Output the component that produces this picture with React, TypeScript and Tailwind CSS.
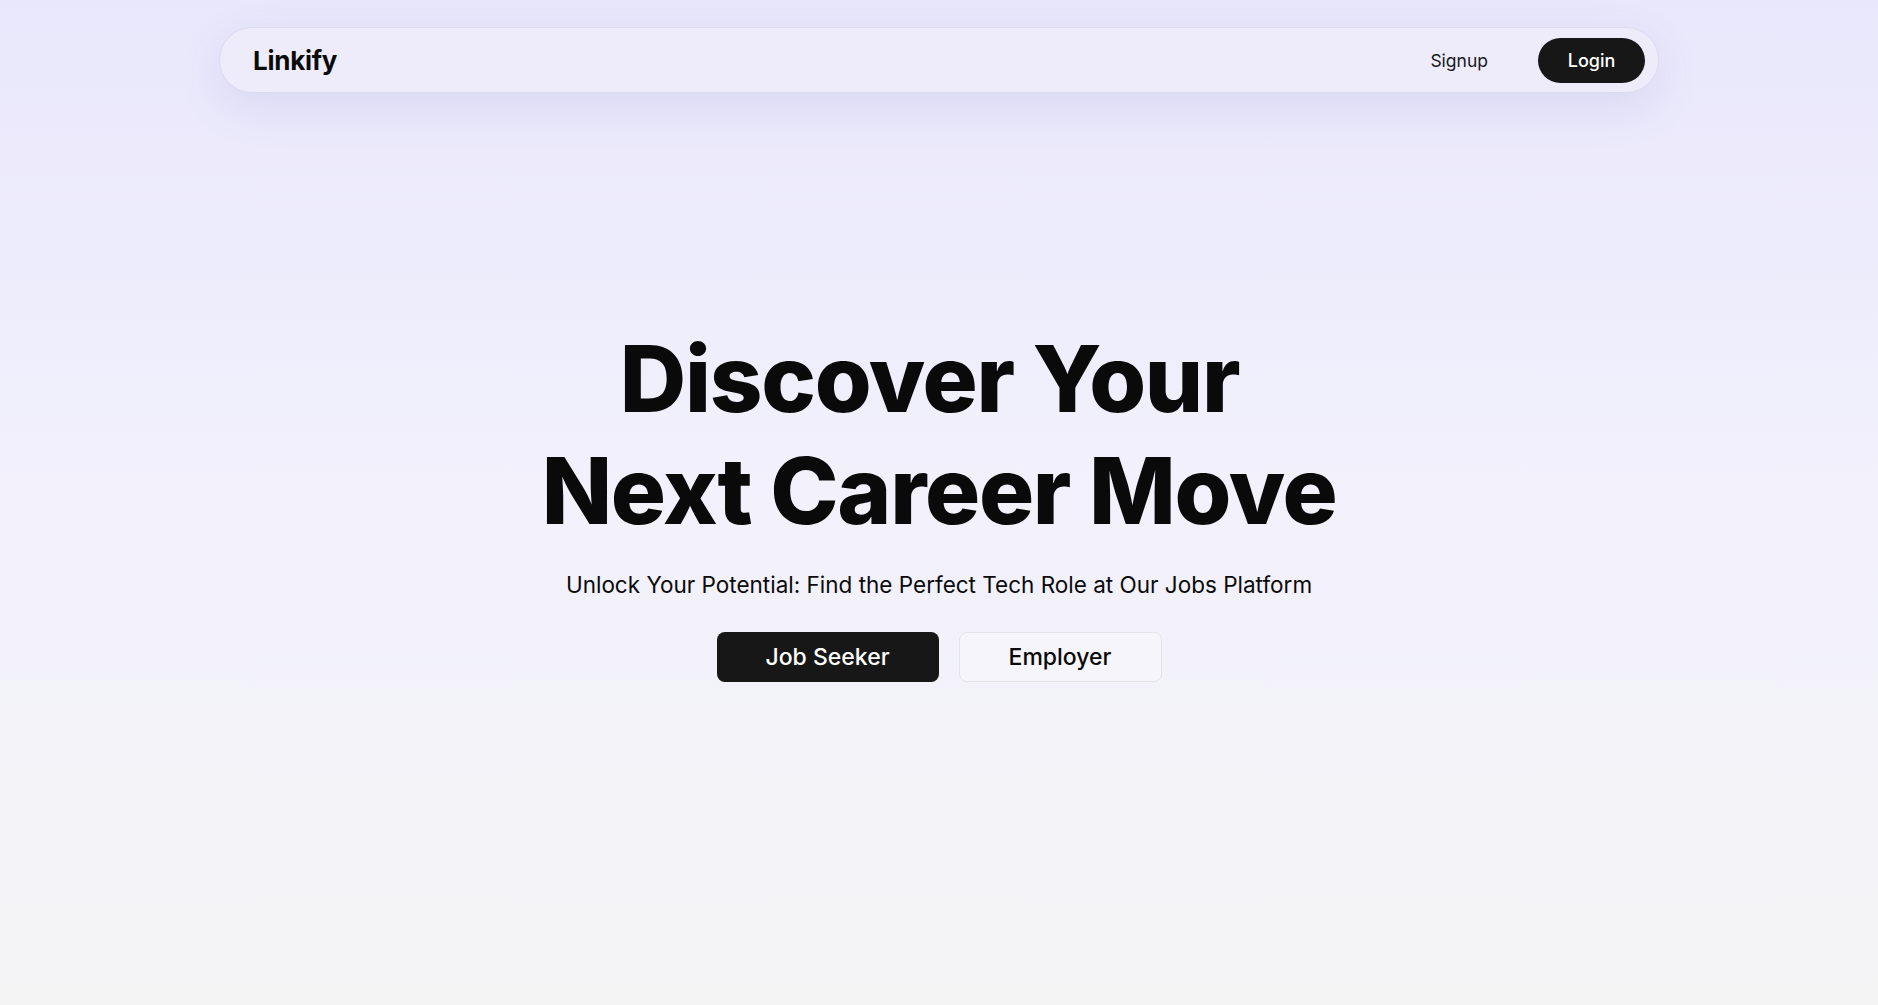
import React from "react";

export default function App() {
  return (
    <div
      className="relative flex h-screen w-full flex-col overflow-hidden bg-gradient-to-b from-[#e9e7fb] via-[#f2f1fc] to-[#f4f4f5] text-[#0a0a0a]"
      style={{ fontFamily: "Inter, 'Noto Sans', sans-serif" }}
    >
      <header className="mx-auto mt-[27px] flex h-[66px] w-[1440px] shrink-0 items-center justify-between rounded-full border border-[#dedbf0] bg-[#eeecfb] pl-[33px] pr-[13px] shadow-[0_14px_44px_rgba(110,100,190,0.13)]">
        <div className="text-[26px] font-bold tracking-[-0.01em] text-[#0a0a0a]">Linkify</div>
        <nav className="flex items-center">
          <button className="mr-[50px] pt-[2px] text-[17.5px] font-normal text-[#171717]">Signup</button>
          <button className="flex h-[45px] w-[107px] items-center justify-center rounded-full bg-[#171717] text-[18px] font-medium text-white">
            Login
          </button>
        </nav>
      </header>

      <main className="flex flex-1 flex-col items-center pt-[230px]">
        <h1 className="text-center text-[92px] font-extrabold leading-[112px] tracking-[-0.014em] text-[#0a0a0a]">
          {"Discover Your\u00A0"}
          <br />
          Next Career Move
        </h1>
        <p className="mt-[21px] text-[22.5px] font-normal text-[#0a0a0a]">
          Unlock Your Potential: Find the Perfect Tech Role at Our Jobs Platform
        </p>
        <div className="mt-[30px] flex gap-[20px]">
          <button className="flex h-[50px] w-[222px] items-center justify-center rounded-lg bg-[#171717] text-[23px] font-medium text-white">
            Job Seeker
          </button>
          <button className="flex h-[50px] w-[203px] items-center justify-center rounded-lg border border-[#e4e4e7] bg-[#f6f5fb] text-[23px] font-medium text-[#0a0a0a]">
            Employer
          </button>
        </div>
      </main>
    </div>
  );
}
